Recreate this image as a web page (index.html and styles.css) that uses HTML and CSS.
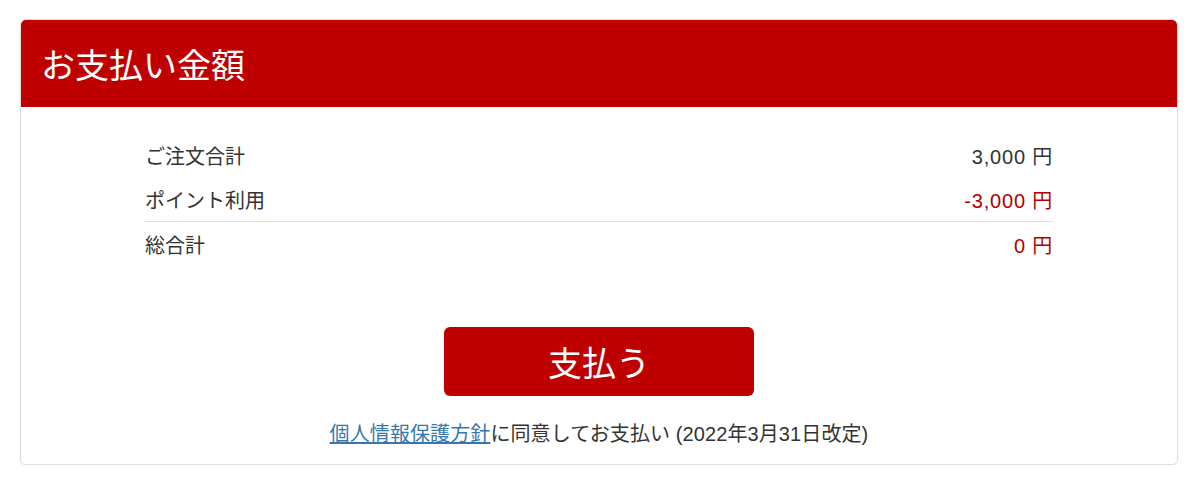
FILE: index.html
```html
<!DOCTYPE html>
<html lang="ja">
<head>
    <meta charset="UTF-8">
    <meta name="viewport" content="width=device-width, initial-scale=1.0">
    <title>お支払い金額</title>
    <link rel="stylesheet" href="styles.css">
</head>
<body>
    <div class="panel">
        <div class="panel-heading">
            <h1>お支払い金額</h1>
        </div>
        <div class="panel-body">
            <table class="summary">
                <tr>
                    <td>ご注文合計</td>
                    <td class="amount">3,000 円</td>
                </tr>
                <tr class="divider">
                    <td>ポイント利用</td>
                    <td class="amount minus">-3,000 円</td>
                </tr>
                <tr>
                    <td>総合計</td>
                    <td class="amount minus">0 円</td>
                </tr>
            </table>
            <div class="actions">
                <button type="button" class="pay-button">支払う</button>
            </div>
            <p class="agree"><a href="#">個人情報保護方針</a>に同意してお支払い (2022年3月31日改定)</p>
        </div>
    </div>
</body>
</html>
```

FILE: styles.css
```css
body {
    margin: 0;
    padding: 19px 22px 0 20px;
    background: #fff;
    font-family: "Liberation Sans", "Noto Sans CJK JP", sans-serif;
    color: #333;
}
.panel {
    border: 1px solid #ddd;
    border-radius: 6px;
    box-shadow: 0 1px 2px rgba(0, 0, 0, 0.08);
    overflow: hidden;
}
.panel-heading {
    background: #bf0000;
    height: 87px;
    display: flex;
    align-items: center;
    padding: 0 20px;
}
h1 {
    margin: 0;
    color: #fff;
    font-size: 34px;
    font-weight: normal;
}
.panel-body {
    padding: 26px 124px 0;
}
.summary {
    width: 100%;
    border-collapse: collapse;
    font-size: 20px;
}
.summary td {
    height: 44px;
    padding: 0;
}
.divider td {
    border-bottom: 1px solid #ddd;
}
.amount {
    text-align: right;
    letter-spacing: 0.8px;
}
.minus {
    color: #b30000;
}
.actions {
    display: flex;
    justify-content: center;
    margin-top: 61px;
}
.pay-button {
    width: 310px;
    height: 69px;
    background: #bf0000;
    color: #fff;
    border: none;
    border-radius: 6px;
    font-family: inherit;
    font-size: 34px;
    cursor: pointer;
}
.agree {
    text-align: center;
    font-size: 20px;
    letter-spacing: 0.1px;
    margin: 22px 0 0;
    padding-bottom: 17px;
}
.agree a {
    color: #3777b0;
}
```
